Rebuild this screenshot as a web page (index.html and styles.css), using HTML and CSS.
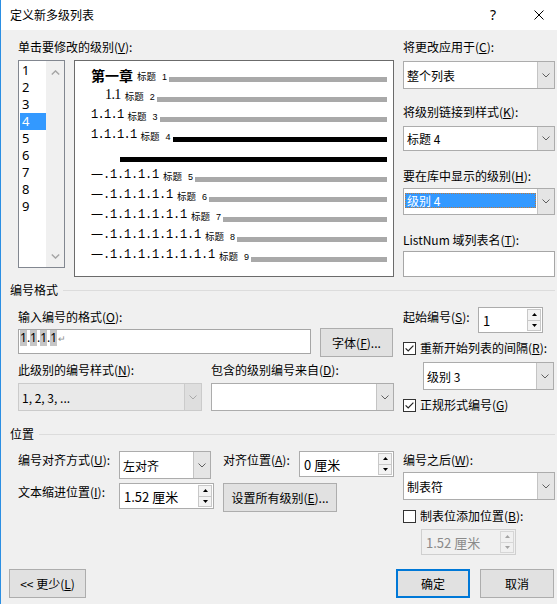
FILE: index.html
```html
<!DOCTYPE html>
<html lang="zh-CN">
<head>
<meta charset="utf-8">
<title>定义新多级列表</title>
<link rel="stylesheet" href="styles.css">
</head>
<body>
<div class="win">
  <div class="titlebar">
    <span class="title">定义新多级列表</span>
    <span class="help">?</span>
    <svg class="close" width="10" height="10" viewBox="0 0 10 10"><path d="M0.5 0.5 L9.5 9.5 M9.5 0.5 L0.5 9.5" stroke="#000" stroke-width="1" fill="none"/></svg>
  </div>

  <div class="top">
    <div class="top-left">
      <div class="lbl mt9">单击要修改的级别(<u>V</u>):</div>
      <div class="lists">
        <div class="levels">
          <div class="items">
            <div class="item">1</div>
            <div class="item">2</div>
            <div class="item">3</div>
            <div class="item sel">4</div>
            <div class="item">5</div>
            <div class="item">6</div>
            <div class="item">7</div>
            <div class="item">8</div>
            <div class="item">9</div>
          </div>
          <div class="vscroll">
            <svg width="9" height="5" viewBox="0 0 9 5"><path d="M0.8 4.5 L4.5 0.9 L8.2 4.5" fill="none" stroke="#a6a6a6" stroke-width="1.4"/></svg>
            <svg width="9" height="5" viewBox="0 0 9 5"><path d="M0.8 0.5 L4.5 4.1 L8.2 0.5" fill="none" stroke="#a6a6a6" stroke-width="1.4"/></svg>
          </div>
        </div>
        <div class="preview">
          <div class="prow"><span class="ch1">第一章</span><span class="tag">标题<i>1</i></span><span class="bar"></span></div>
          <div class="prow ind1"><span class="n2">1.1</span><span class="tag">标题<i>2</i></span><span class="bar"></span></div>
          <div class="prow"><span class="num">1.1.1</span><span class="tag">标题<i>3</i></span><span class="bar"></span></div>
          <div class="prow"><span class="num">1.1.1.1</span><span class="tag">标题<i>4</i></span><span class="bar dark"></span></div>
          <div class="prow"><span class="bar dark ind2"></span></div>
          <div class="prow"><span class="yi">一</span><span class="num wide">.1.1.1.1</span><span class="tag">标题<i>5</i></span><span class="bar"></span></div>
          <div class="prow"><span class="yi">一</span><span class="num wide">.1.1.1.1.1</span><span class="tag">标题<i>6</i></span><span class="bar"></span></div>
          <div class="prow"><span class="yi">一</span><span class="num wide">.1.1.1.1.1.1</span><span class="tag">标题<i>7</i></span><span class="bar"></span></div>
          <div class="prow"><span class="yi">一</span><span class="num wide">.1.1.1.1.1.1.1</span><span class="tag">标题<i>8</i></span><span class="bar"></span></div>
          <div class="prow"><span class="yi">一</span><span class="num wide">.1.1.1.1.1.1.1.1</span><span class="tag">标题<i>9</i></span><span class="bar"></span></div>
        </div>
      </div>
    </div>

    <div class="top-right">
      <div class="lbl mt9">将更改应用于(<u>C</u>):</div>
      <div class="combo h28 mt6"><span class="cv">整个列表</span><span class="cb"><svg width="8" height="5" viewBox="0 0 8 5"><path d="M0.5 0.5 L4 4 L7.5 0.5" fill="none" stroke="#5f5f5f"/></svg></span></div>
      <div class="lbl mt15">将级别链接到样式(<u>K</u>):</div>
      <div class="combo h25 mt6"><span class="cv">标题 4</span><span class="cb"><svg width="8" height="5" viewBox="0 0 8 5"><path d="M0.5 0.5 L4 4 L7.5 0.5" fill="none" stroke="#5f5f5f"/></svg></span></div>
      <div class="lbl mt17">要在库中显示的级别(<u>H</u>):</div>
      <div class="combo h27 mt4"><span class="cv hlwrap"><span class="hl">级别 4</span></span><span class="cb"><svg width="8" height="5" viewBox="0 0 8 5"><path d="M0.5 0.5 L4 4 L7.5 0.5" fill="none" stroke="#5f5f5f"/></svg></span></div>
      <div class="lbl mt17">ListNum 域列表名(<u>T</u>):</div>
      <div class="edit h26 mt3"></div>
    </div>
  </div>

  <div class="ghead mt5"><span>编号格式</span><span class="gline"></span></div>

  <div class="sect">
    <div class="sect-left">
      <div class="lbl mt11">输入编号的格式(<u>O</u>):</div>
      <div class="row mt3">
        <div class="edit fmt w293 h25 mt1"><span class="shade">1</span>.<span class="shade">1</span>.<span class="shade">1</span>.<span class="shade">1</span><span class="ret">↵</span></div>
        <div class="btn w73 h29 ml9">字体(<u>F</u>)...</div>
      </div>
      <div class="row mt5">
        <div class="lbl w193">此级别的编号样式(<u>N</u>):</div>
        <div class="lbl">包含的级别编号来自(<u>D</u>):</div>
      </div>
      <div class="row mt5">
        <div class="combo dis w184 h28"><span class="cv">1, 2, 3, ...</span><span class="cb"><svg width="8" height="5" viewBox="0 0 8 5"><path d="M0.5 0.5 L4 4 L7.5 0.5" fill="none" stroke="#a9a9a9"/></svg></span></div>
        <div class="combo w183 h28 ml9"><span class="cv"></span><span class="cb"><svg width="8" height="5" viewBox="0 0 8 5"><path d="M0.5 0.5 L4 4 L7.5 0.5" fill="none" stroke="#5f5f5f"/></svg></span></div>
      </div>
    </div>
    <div class="sect-right">
      <div class="row mt9">
        <div class="lbl w75 mt2">起始编号(<u>S</u>):</div>
        <div class="spin w65 h26"><span class="sv">1</span><span class="sb"><span class="sbtn"><svg width="5" height="3" viewBox="0 0 5 3"><path d="M0 3 L2.5 0 L5 3Z" fill="#000"/></svg></span><span class="sbtn"><svg width="5" height="3" viewBox="0 0 5 3"><path d="M0 0 L2.5 3 L5 0Z" fill="#000"/></svg></span></span></div>
      </div>
      <div class="chk mt7"><svg width="13" height="13" viewBox="0 0 13 13"><rect x="0.5" y="0.5" width="12" height="12" fill="#fff" stroke="#333"/><path d="M2.6 6.4 L5.2 9 L10.4 3.6" fill="none" stroke="#222" stroke-width="1.2"/></svg><span>重新开始列表的间隔(<u>R</u>):</span></div>
      <div class="combo w131 h28 mt6 ml20"><span class="cv">级别 3</span><span class="cb"><svg width="8" height="5" viewBox="0 0 8 5"><path d="M0.5 0.5 L4 4 L7.5 0.5" fill="none" stroke="#5f5f5f"/></svg></span></div>
      <div class="chk mt7"><svg width="13" height="13" viewBox="0 0 13 13"><rect x="0.5" y="0.5" width="12" height="12" fill="#fff" stroke="#333"/><path d="M2.6 6.4 L5.2 9 L10.4 3.6" fill="none" stroke="#222" stroke-width="1.2"/></svg><span>正规形式编号(<u>G</u>)</span></div>
    </div>
  </div>

  <div class="ghead mt13"><span>位置</span><span class="gline"></span></div>

  <div class="sect">
    <div class="sect-left">
      <div class="row mt9">
        <div class="lbl w101 mt1">编号对齐方式(<u>U</u>):</div>
        <div class="combo w92 h28"><span class="cv">左对齐</span><span class="cb"><svg width="8" height="5" viewBox="0 0 8 5"><path d="M0.5 0.5 L4 4 L7.5 0.5" fill="none" stroke="#5f5f5f"/></svg></span></div>
        <div class="lbl w76 ml12 mt1">对齐位置(<u>A</u>):</div>
        <div class="spin w95 h26"><span class="sv">0 厘米</span><span class="sb"><span class="sbtn"><svg width="5" height="3" viewBox="0 0 5 3"><path d="M0 3 L2.5 0 L5 3Z" fill="#000"/></svg></span><span class="sbtn"><svg width="5" height="3" viewBox="0 0 5 3"><path d="M0 0 L2.5 3 L5 0Z" fill="#000"/></svg></span></span></div>
      </div>
      <div class="row mt4">
        <div class="lbl w101 mt1">文本缩进位置(<u>I</u>):</div>
        <div class="spin w95 h26"><span class="sv">1.52 厘米</span><span class="sb"><span class="sbtn"><svg width="5" height="3" viewBox="0 0 5 3"><path d="M0 3 L2.5 0 L5 3Z" fill="#000"/></svg></span><span class="sbtn"><svg width="5" height="3" viewBox="0 0 5 3"><path d="M0 0 L2.5 3 L5 0Z" fill="#000"/></svg></span></span></div>
        <div class="btn w114 h29 ml9">设置所有级别(<u>E</u>)...</div>
      </div>
    </div>
    <div class="sect-right">
      <div class="lbl mt10">编号之后(<u>W</u>):</div>
      <div class="combo h28 mt4"><span class="cv">制表符</span><span class="cb"><svg width="8" height="5" viewBox="0 0 8 5"><path d="M0.5 0.5 L4 4 L7.5 0.5" fill="none" stroke="#5f5f5f"/></svg></span></div>
      <div class="chk mt8"><svg width="13" height="13" viewBox="0 0 13 13"><rect x="0.5" y="0.5" width="12" height="12" fill="#fff" stroke="#333"/></svg><span>制表位添加位置(<u>B</u>):</span></div>
      <div class="spin dis w95 h26 mt5 ml18"><span class="sv">1.52 厘米</span><span class="sb"><span class="sbtn"><svg width="5" height="3" viewBox="0 0 5 3"><path d="M0 3 L2.5 0 L5 3Z" fill="#a3a3a3"/></svg></span><span class="sbtn"><svg width="5" height="3" viewBox="0 0 5 3"><path d="M0 0 L2.5 3 L5 0Z" fill="#a3a3a3"/></svg></span></span></div>
    </div>
  </div>

  <div class="bottom">
    <div class="btn w77 h29">&lt;&lt; 更少(<u>L</u>)</div>
    <div class="btn def w74 h29 push">确定</div>
    <div class="btn w74 h29 ml10">取消</div>
  </div>
</div>
</body>
</html>
```

FILE: styles.css
```css
* { box-sizing: border-box; }
html, body { margin: 0; padding: 0; }
body {
  width: 557px;
  height: 604px;
  overflow: hidden;
  background: #f0f0f0;
  font-family: "Noto Sans CJK SC", "Noto Sans", sans-serif;
  font-size: 12px;
  color: #000;
}
u { text-decoration: underline; text-underline-offset: 1px; }

.win {
  width: 557px;
  height: 604px;
  border-left: 1px solid #2b8fe3;
  background: #f0f0f0;
}

/* title bar */
.titlebar {
  height: 30px;
  background: #fff;
  display: flex;
  align-items: center;
  padding-left: 9px;
  padding-right: 13px;
}
.title { flex: 1; line-height: 16px; }
.help { width: 20px; text-align: center; font-size: 14px; line-height: 16px; margin-right: 31px; font-family: "Noto Sans", sans-serif; }
.close { display: block; }

/* generic */
.lbl { line-height: 16px; white-space: nowrap; }
.row { display: flex; align-items: flex-start; }
.mt1 { margin-top: 1px; } .mt2 { margin-top: 2px; } .mt3 { margin-top: 3px; } .mt4 { margin-top: 4px; }
.mt5 { margin-top: 5px; } .mt6 { margin-top: 6px; } .mt7 { margin-top: 7px; } .mt8 { margin-top: 8px; }
.mt9 { margin-top: 9px; } .mt10 { margin-top: 10px; } .mt11 { margin-top: 11px; } .mt13 { margin-top: 13px; }
.mt15 { margin-top: 15px; } .mt17 { margin-top: 17px; }
.ml9 { margin-left: 9px; } .ml10 { margin-left: 10px; } .ml12 { margin-left: 12px; } .ml18 { margin-left: 18px; } .ml20 { margin-left: 20px; }
.h25 { height: 25px; } .h26 { height: 26px; } .h27 { height: 27px; } .h28 { height: 28px; } .h29 { height: 29px; }
.w65 { width: 65px; } .w73 { width: 73px; } .w74 { width: 74px; } .w75 { width: 75px; } .w76 { width: 76px; } .w77 { width: 77px; }
.w92 { width: 92px; } .w95 { width: 95px; } .w101 { width: 101px; } .w114 { width: 114px; } .w131 { width: 131px; }
.w183 { width: 183px; } .w184 { width: 184px; } .w193 { width: 193px; } .w293 { width: 293px; }

/* top */
.top { display: flex; padding-left: 17px; }
.top-left { width: 376px; }
.top-right { width: 152px; margin-left: 9px; display: flex; flex-direction: column; }
.lists { display: flex; margin-top: 5px; }

.levels {
  width: 47px;
  height: 208px;
  border: 1px solid #828790;
  background: #fff;
  display: flex;
}
.items { width: 27px; padding: 1px 0 0 1px; }
.item {
  height: 17px;
  line-height: 17px;
  padding-left: 2px;
  font-family: "Noto Sans", sans-serif;
  font-size: 13px;
}
.item.sel { background: #3399ff; color: #fff; }
.vscroll {
  flex: 1;
  background: #f0f0f0;
  display: flex;
  flex-direction: column;
  justify-content: space-between;
  align-items: center;
  padding: 9px 0 8px;
}
.vscroll svg { display: block; }

.preview {
  width: 320px;
  height: 217px;
  margin-left: 9px;
  border: 1px solid #6b6b6b;
  background: #fff;
  padding: 4px 6px 0 16px;
}
.prow { height: 20px; display: flex; align-items: center; }
.prow.ind1 { padding-left: 14px; }
.ch1 { font-weight: bold; font-size: 14px; line-height: 16px; }
.n2 { font-family: "Liberation Serif", serif; font-size: 14px; line-height: 16px; letter-spacing: -0.6px; }
.num { font-family: "Liberation Mono", monospace; font-size: 12px; line-height: 16px; letter-spacing: -0.7px; }
.num.wide { letter-spacing: -0.2px; }
.yi { font-size: 12px; line-height: 16px; width: 12px; }
.tag { font-size: 9.5px; line-height: 12px; margin-left: 4px; margin-top: 3px; white-space: nowrap; }
.tag i { font-style: normal; font-family: "Liberation Sans", sans-serif; font-size: 9px; margin-left: 6px; }
.bar {
  flex: 1;
  height: 5px;
  align-self: flex-start;
  margin-top: 12px;
  margin-left: 2px;
  background: #a9a9a9;
}
.bar.dark { background: #000; }
.bar.ind2 { margin-left: 29px; }

/* combo box */
.combo {
  display: flex;
  border: 1px solid #acacac;
  background: #fff;
}
.cv {
  flex: 1;
  display: flex;
  align-items: center;
  padding-left: 3px;
  white-space: nowrap;
}
.cb {
  width: 17px;
  border-left: 1px solid #c4c4c4;
  background: #e5e5e5;
  display: flex;
  align-items: center;
  justify-content: center;
}
.cb svg { display: block; }
.combo.dis { background: #e9e9e9; border-color: #cbcbcb; color: #000; }
.combo.dis .cb { background: #dedede; border-left-color: #cbcbcb; }
.hlwrap { padding: 4px 1px 6px 1px; align-items: stretch; }
.hl {
  flex: 1;
  background: #3399ff;
  color: #fff;
  border: 1px dotted #c07a3a;
  padding-left: 1px;
  display: flex;
  align-items: center;
}

/* edit */
.edit {
  border: 1px solid #a6a6a6;
  background: #fff;
}
.edit.fmt {
  display: flex;
  align-items: flex-start;
  padding: 0 0 0 1px;
  line-height: 16px;
  font-family: "Noto Sans", sans-serif;
  font-size: 12px;
}
.shade { background: #c6c6c6; display: inline-block; height: 16px; }
.ret { color: #8c8c8c; font-size: 9px; margin-left: 1px; margin-top: 1px; }

/* spinner */
.spin {
  display: flex;
  border: 1px solid #acacac;
  background: #fff;
}
.sv {
  flex: 1;
  display: flex;
  align-items: center;
  padding-left: 4px;
  font-size: 13px;
  white-space: nowrap;
}
.sb {
  width: 14px;
  margin: 1px 1px 1px 0;
  display: flex;
  flex-direction: column;
}
.sbtn {
  flex: 1;
  border: 1px solid #c8c8c8;
  background: #f3f3f3;
  display: flex;
  align-items: center;
  justify-content: center;
}
.sbtn + .sbtn { border-top: none; }
.sbtn svg { display: block; }
.spin.dis { background: #f0f0f0; border-color: #cfcfcf; color: #8a8a8a; }
.spin.dis .sbtn { background: #f0f0f0; border-color: #d6d6d6; }

/* checkbox */
.chk {
  display: flex;
  align-items: center;
  height: 16px;
  line-height: 16px;
  white-space: nowrap;
}
.chk svg { display: block; margin-right: 4px; }

/* button */
.btn {
  display: flex;
  align-items: center;
  justify-content: center;
  background: #e1e1e1;
  border: 1px solid #adadad;
  white-space: nowrap;
}
.btn.def { border: 2px solid #0078d7; }
.push { margin-left: auto; }

/* group header */
.ghead {
  display: flex;
  align-items: center;
  padding-left: 9px;
  padding-right: 2px;
  line-height: 16px;
}
.gline { flex: 1; height: 1px; background: #dcdcdc; margin-left: 5px; }

.sect { display: flex; padding-left: 17px; }
.sect-left { width: 376px; }
.sect-right { width: 152px; margin-left: 9px; display: flex; flex-direction: column; align-items: flex-start; }
.sect-right .combo.h28.mt4 { align-self: stretch; }

.bottom {
  display: flex;
  margin-top: 14px;
  padding-left: 8px;
  padding-right: 3px;
}
```
